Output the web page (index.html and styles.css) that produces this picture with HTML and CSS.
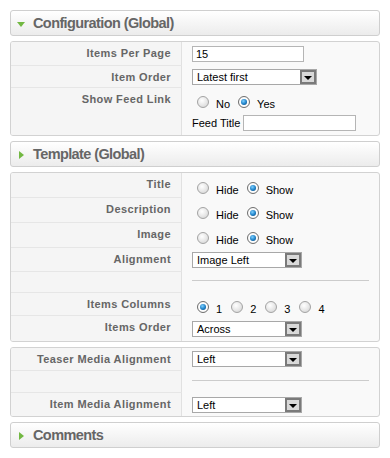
FILE: index.html
```html
<!DOCTYPE html>
<html lang="en">
<head>
    <meta charset="UTF-8">
    <title>Parameters</title>
    <link rel="stylesheet" href="styles.css">
</head>
<body>
    <div class="params">

        <div class="pane-toggler is-open"><span class="arrow"></span>Configuration (Global)</div>
        <div class="pane">
            <div class="row h24">
                <div class="key">Items Per Page</div>
                <div class="val pt4"><span class="text-input w112">15</span></div>
            </div>
            <div class="row h22">
                <div class="key">Item Order</div>
                <div class="val pt3"><span class="select w125"><span class="select-text">Latest first</span><span class="select-btn"></span></span></div>
            </div>
            <div class="row h47">
                <div class="key">Show Feed Link</div>
                <div class="val pt8">
                    <div class="radios">
                        <span class="radio"></span><span class="radio-label">No</span>
                        <span class="radio checked"></span><span class="radio-label">Yes</span>
                    </div>
                    <div class="feed-title">Feed Title <span class="text-input w113"></span></div>
                </div>
            </div>
        </div>

        <div class="pane-toggler"><span class="arrow"></span>Template (Global)</div>
        <div class="pane">
            <div class="row h25">
                <div class="key">Title</div>
                <div class="val pt9">
                    <div class="radios">
                        <span class="radio"></span><span class="radio-label">Hide</span>
                        <span class="radio checked"></span><span class="radio-label">Show</span>
                    </div>
                </div>
            </div>
            <div class="row h25">
                <div class="key">Description</div>
                <div class="val pt9">
                    <div class="radios">
                        <span class="radio"></span><span class="radio-label">Hide</span>
                        <span class="radio checked"></span><span class="radio-label">Show</span>
                    </div>
                </div>
            </div>
            <div class="row h25">
                <div class="key">Image</div>
                <div class="val pt9">
                    <div class="radios">
                        <span class="radio"></span><span class="radio-label">Hide</span>
                        <span class="radio checked"></span><span class="radio-label">Show</span>
                    </div>
                </div>
            </div>
            <div class="row h24">
                <div class="key">Alignment</div>
                <div class="val pt4"><span class="select w110"><span class="select-text">Image Left</span><span class="select-btn"></span></span></div>
            </div>
            <div class="row h21">
                <div class="key"></div>
                <div class="val pt8"><div class="spacer-line"></div></div>
            </div>
            <div class="row h23">
                <div class="key">Items Columns</div>
                <div class="val pt8">
                    <div class="radios cols">
                        <span class="radio checked"></span><span class="radio-label">1</span>
                        <span class="radio"></span><span class="radio-label">2</span>
                        <span class="radio"></span><span class="radio-label">3</span>
                        <span class="radio"></span><span class="radio-label">4</span>
                    </div>
                </div>
            </div>
            <div class="row h25">
                <div class="key">Items Order</div>
                <div class="val pt5"><span class="select w110"><span class="select-text">Across</span><span class="select-btn"></span></span></div>
            </div>
        </div>

        <div class="pane">
            <div class="row h23">
                <div class="key">Teaser Media Alignment</div>
                <div class="val pt3"><span class="select w110"><span class="select-text">Left</span><span class="select-btn"></span></span></div>
            </div>
            <div class="row h22">
                <div class="key"></div>
                <div class="val pt9"><div class="spacer-line"></div></div>
            </div>
            <div class="row h23">
                <div class="key">Item Media Alignment</div>
                <div class="val pt4"><span class="select w110"><span class="select-text">Left</span><span class="select-btn"></span></span></div>
            </div>
        </div>

        <div class="pane-toggler"><span class="arrow"></span>Comments</div>

    </div>
</body>
</html>
```

FILE: styles.css
```css
html, body {
    margin: 0;
    background-color: #ffffff;
}
body {
    padding: 10px;
    font-family: 'Liberation Sans', Arial, sans-serif;
    font-size: 11px;
    color: #000;
}

.params {
    width: 370px;
    display: flex;
    flex-direction: column;
    gap: 5px;
}

.pane-toggler {
    box-sizing: border-box;
    height: 26px;
    display: flex;
    align-items: center;
    border: 1px solid #cfcfcf;
    border-radius: 3px;
    background: linear-gradient(#ffffff, #ececec);
    font-size: 14.5px;
    font-weight: bold;
    letter-spacing: -0.6px;
    color: #666666;
    padding-left: 6px;
}
.pane-toggler .arrow {
    width: 0;
    height: 0;
    margin: 1px 9px 0 2px;
    border-top: 4px solid transparent;
    border-bottom: 4px solid transparent;
    border-left: 5px solid #72b842;
}
.pane-toggler.is-open .arrow {
    margin: 2px 8px 0 0;
    border-left: 4px solid transparent;
    border-right: 4px solid transparent;
    border-top: 5px solid #72b842;
    border-bottom: 0;
}

.pane {
    border: 1px solid #d2d2d2;
    border-radius: 3px;
    background-color: #f9f9f9;
    overflow: hidden;
}
.row {
    display: grid;
    grid-template-columns: 171px 1fr;
    box-sizing: border-box;
}
.key {
    box-sizing: border-box;
    padding: 5px 10px 0 0;
    text-align: right;
    font-weight: bold;
    letter-spacing: 0.4px;
    line-height: 13px;
    color: #666666;
    background-color: #f5f5f5;
    border-right: 1px solid #e1e1e1;
    border-bottom: 1px solid #e6e6e6;
}
.row:last-child .key {
    border-bottom: 0;
}
.val {
    padding-left: 10px;
}

.h21 { height: 21px; }
.h22 { height: 22px; }
.h23 { height: 23px; }
.h24 { height: 24px; }
.h25 { height: 25px; }
.h47 { height: 47px; }

.pt3 { padding-top: 3px; }
.pt4 { padding-top: 4px; }
.pt5 { padding-top: 5px; }
.pt8 { padding-top: 8px; }
.pt9 { padding-top: 9px; }

.text-input {
    box-sizing: border-box;
    display: inline-block;
    height: 16px;
    border: 1px solid #b5b5b5;
    background-color: #ffffff;
    padding: 0 3px;
    line-height: 14px;
    vertical-align: middle;
}
.w112 { width: 112px; }
.w113 { width: 113px; }
.w110 { width: 110px; }
.w125 { width: 125px; }

.select {
    box-sizing: border-box;
    display: flex;
    align-items: center;
    justify-content: space-between;
    height: 16px;
    border: 1px solid #a8a8a8;
    background-color: #ffffff;
}
.select-text {
    padding-left: 4px;
    line-height: 14px;
}
.select-btn {
    box-sizing: border-box;
    width: 16px;
    height: 14px;
    border: 2px solid #7a7a7a;
    background-color: #d9d9d9;
    display: flex;
    align-items: center;
    justify-content: center;
}
.select-btn::after {
    content: '';
    width: 0;
    height: 0;
    margin-top: 2px;
    border-left: 4px solid transparent;
    border-right: 4px solid transparent;
    border-top: 4px solid #000000;
}

.radios {
    display: flex;
    align-items: center;
    height: 12px;
    padding-left: 5px;
}
.radio {
    box-sizing: border-box;
    width: 12px;
    height: 12px;
    border-radius: 50%;
    border: 1px solid #a3a3a3;
    background: radial-gradient(circle at 40% 35%, #ffffff 0%, #e6e6e6 55%, #cfcfcf 100%);
    display: flex;
    align-items: center;
    justify-content: center;
}
.radio.checked {
    border-color: #6e6e6e;
    background: radial-gradient(circle at 50% 50%, #e8e8e8 0%, #ffffff 60%, #d0d0d0 100%);
}
.radio.checked::after {
    content: '';
    width: 6px;
    height: 6px;
    border-radius: 50%;
    background: radial-gradient(circle at 40% 35%, #7fd0ff 0%, #1b7fc6 55%, #0b3d6b 100%);
}
.radio-label {
    margin: 3px 8px 0 7px;
    font-size: 11px;
}
.cols .radio-label {
    margin: 3px 9px 0 7px;
}

.feed-title {
    margin-top: 7px;
    display: flex;
    align-items: center;
    gap: 3px;
    font-size: 11px;
}

.spacer-line {
    width: 177px;
    height: 1px;
    background-color: #cccccc;
}
```
